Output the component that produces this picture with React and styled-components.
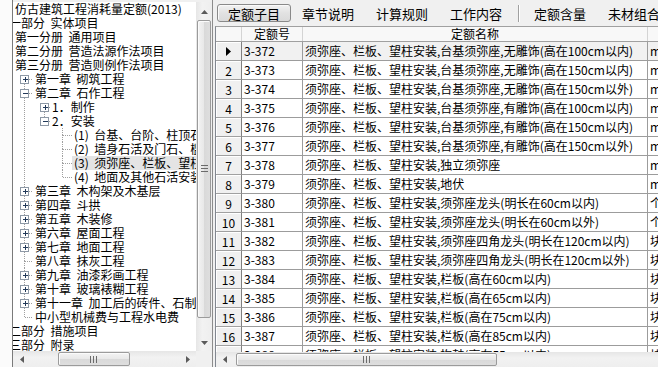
import React from 'react'
import styled, { createGlobalStyle } from 'styled-components'

const GlobalStyle = createGlobalStyle`
  html, body {
    margin: 0;
    padding: 0;
    overflow: hidden;
  }
  body {
    font-family: "Noto Sans CJK SC", "Liberation Sans", sans-serif;
    font-size: 12px;
    color: #000;
    background: #f0f0f0;
  }
`

const Window = styled.div`
  width: 658px;
  height: 367px;
  display: flex;
  overflow: hidden;
  background: #f0f0f0;
`

const EdgeStrip = styled.div`
  width: 12px;
  flex: none;
  background: #fbfbfb;
  border-right: 1px solid #7a7a7a;
`

const TreePane = styled.div`
  width: 199px;
  flex: none;
  margin-top: 2px;
  display: grid;
  grid-template-columns: 183px 16px;
  grid-template-rows: 349px 16px;
  background: #fff;
`

const TreeBody = styled.div`
  overflow: hidden;
  background: #fff;
`

const TreeRow = styled.div`
  height: 14px;
  display: flex;
  align-items: center;
  white-space: pre;
`

const TreeLabel = styled.span`
  flex: none;
  line-height: 14px;
  padding: 0 2px;
  margin-left: ${p => p.$shift || 0}px;
  background: ${p => (p.$selected ? '#e4e4e4' : 'transparent')};
  min-width: ${p => (p.$selected ? '200px' : '0')};
`

const Splitter = styled.div`
  width: 2px;
  flex: none;
  border-left: 1px solid #8c8c8c;
  background: #f0f0f0;
`

const RightPane = styled.div`
  width: 443px;
  flex: none;
  display: flex;
  flex-direction: column;
`

const TabBar = styled.div`
  height: 26px;
  flex: none;
  display: flex;
  align-items: center;
  padding-left: 2px;
  background: #f0f0f0;
`

const Tab = styled.div`
  width: 74px;
  height: 18px;
  flex: none;
  box-sizing: border-box;
  display: flex;
  align-items: center;
  justify-content: center;
  font-size: 13px;
  border: 1px solid ${p => (p.$active ? '#8a8a8a' : 'transparent')};
  border-radius: 3px;
  background: ${p => (p.$active ? 'linear-gradient(#f2f2f2, #e2e2e2 50%, #dadada)' : 'transparent')};
  box-shadow: ${p => (p.$active ? 'inset 1px 1px 0 #fafafa' : 'none')};
`

const TabDivider = styled.div`
  width: 1px;
  height: 17px;
  flex: none;
  margin: 0 3px 0 5px;
  background: #a0a0a0;
  border-right: 1px solid #fff;
`

const Grid = styled.div`
  flex: 1;
  display: flex;
  flex-direction: column;
  border-top: 1px solid #a0a0a0;
  border-left: 1px solid #828790;
  background: #fff;
  overflow: hidden;
`

const HeadRow = styled.div`
  height: 15px;
  flex: none;
  display: flex;
  background: #f8f8f8;
  border-bottom: 1px solid #a0a0a0;
  box-sizing: border-box;
`

const HeadCell = styled.div`
  width: ${p => p.$w}px;
  flex: none;
  box-sizing: border-box;
  border-right: 1px solid #d4d4d4;
  text-align: center;
  line-height: 14px;
  white-space: nowrap;
  overflow: hidden;
`

const Body = styled.div`
  flex: 1;
  overflow: hidden;
`

const GridRow = styled.div`
  height: 19px;
  display: flex;
  background: ${p => (p.$current ? '#f1f1f1' : '#fff')};
`

const RowHead = styled.div`
  width: 26px;
  flex: none;
  box-sizing: border-box;
  display: flex;
  align-items: center;
  justify-content: center;
  background: #f0f0f0;
  border-right: 1px solid #808080;
  border-bottom: 1px solid #a0a0a0;
  box-shadow: inset 1px 1px 0 #fff;
`

const Cell = styled.div`
  width: ${p => p.$w}px;
  flex: none;
  box-sizing: border-box;
  padding-left: 2px;
  line-height: 18px;
  border-right: 1px solid #9c9c9c;
  border-bottom: 1px solid #9c9c9c;
  white-space: nowrap;
  overflow: hidden;
`

const HScroll = styled.div`
  height: ${p => p.$h}px;
  flex: none;
  display: flex;
  align-items: stretch;
  background: linear-gradient(#e6e6e6, #f2f2f2 40%, #eeeeee);
`

const VScroll = styled.div`
  display: flex;
  flex-direction: column;
  background: linear-gradient(to right, #e6e6e6, #f2f2f2 40%, #eeeeee);
`

const ArrowBox = styled.div`
  flex: none;
  width: ${p => (p.$vertical ? 'auto' : '17px')};
  height: ${p => (p.$vertical ? '17px' : 'auto')};
  display: flex;
  align-items: center;
  justify-content: center;
`

const Thumb = styled.div`
  flex: none;
  box-sizing: border-box;
  display: flex;
  align-items: center;
  justify-content: center;
  margin: ${p => (p.$vertical ? '0 1px' : '1px 0')};
  width: ${p => (p.$vertical ? 'auto' : `${p.$size}px`)};
  height: ${p => (p.$vertical ? `${p.$size}px` : 'auto')};
  border: 1px solid #9b9b9b;
  border-radius: 2px;
  background: ${p =>
    p.$vertical
      ? 'linear-gradient(to right, #f3f3f3, #e8e8e8 50%, #d9d9d9 51%, #dedede)'
      : 'linear-gradient(#f3f3f3, #e8e8e8 50%, #d9d9d9 51%, #dedede)'};
  box-shadow: inset 1px 1px 0 #fbfbfb;
`

const Spacer = styled.div`
  flex: none;
  width: ${p => p.$w || 0}px;
  height: ${p => p.$h || 0}px;
`

const Fill = styled.div`
  flex: 1;
`

const Corner = styled.div`
  background: #f0f0f0;
`

const Arrow = ({ dir }) => {
  const pts = {
    up: '0,4 3.5,0 7,4',
    down: '0,0 3.5,4 7,0',
    left: '4,0 0,3.5 4,7',
    right: '0,0 4,3.5 0,7',
  }[dir]
  const vertical = dir === 'up' || dir === 'down'
  return (
    <svg width={vertical ? 7 : 4} height={vertical ? 4 : 7}>
      <polygon points={pts} fill="#5a5a5a" />
    </svg>
  )
}

const Grip = ({ vertical }) => (
  <svg width={vertical ? 7 : 8} height={vertical ? 8 : 7}>
    {[0, 3, 6].map(o =>
      vertical ? (
        <rect key={o} x="0" y={o} width="7" height="1" fill="#6b6b6b" />
      ) : (
        <rect key={o} x={o} y="0" width="1" height="7" fill="#6b6b6b" />
      )
    )}
  </svg>
)

const TreeGutter = ({ g }) => {
  const dots = { stroke: '#a0a0a0', strokeWidth: 1, strokeDasharray: '1 1' }
  const x = g.x + 0.5
  return (
    <svg width={g.w} height="14" style={{ flex: 'none' }} shapeRendering="crispEdges">
      {g.pass.map(p => (
        <line key={p} x1={p + 0.5} y1="0" x2={p + 0.5} y2="14" {...dots} />
      ))}
      {g.top && <line x1={x} y1="0" x2={x} y2={g.box ? 3 : 7} {...dots} />}
      {g.bottom && <line x1={x} y1={g.box ? 12 : 7} x2={x} y2="14" {...dots} />}
      <line x1={g.box ? g.x + 5 : g.x + 1} y1="7.5" x2={g.w} y2="7.5" {...dots} />
      {g.box && (
        <g>
          <rect x={g.x - 3.5} y="3.5" width="8" height="8" fill="#fff" stroke="#8e99a6" />
          <rect x={g.x - 1} y="7" width="5" height="1" fill="#233a5a" />
          {g.box === '+' && <rect x={g.x + 1} y="5" width="1" height="5" fill="#233a5a" />}
        </g>
      )}
    </svg>
  )
}

const chap = (box, top, bottom) => ({ pass: [], x: 11, box, top, bottom, w: 20 })
const sec = (box, top, bottom) => ({ pass: [11], x: 31, box, top, bottom, w: 37 })
const item = bottom => ({ pass: [11], x: 49, box: null, top: true, bottom, w: 59 })

const tree = [
  { text: '仿古建筑工程消耗量定额(2013)' },
  { text: '第一部分  实体项目', shift: -18 },
  { text: '第一分册  通用项目' },
  { text: '第二分册  营造法源作法项目' },
  { text: '第三分册  营造则例作法项目' },
  { text: '第一章  砌筑工程', g: chap('+', false, true) },
  { text: '第二章  石作工程', g: chap('-', true, true) },
  { text: '1．制作', g: sec('+', false, true) },
  { text: '2．安装', g: sec('-', true, false) },
  { text: '(1)  台基、台阶、柱顶石安装', g: item(true) },
  { text: '(2)  墙身石活及门石、槛垫石安装', g: item(true) },
  { text: '(3)  须弥座、栏板、望柱安装', g: item(true), selected: true },
  { text: '(4)  地面及其他石活安装', g: item(false) },
  { text: '第三章  木构架及木基层', g: chap('+', true, true) },
  { text: '第四章  斗拱', g: chap('+', true, true) },
  { text: '第五章  木装修', g: chap('+', true, true) },
  { text: '第六章  屋面工程', g: chap('+', true, true) },
  { text: '第七章  地面工程', g: chap('+', true, true) },
  { text: '第八章  抹灰工程', g: chap(null, true, true) },
  { text: '第九章  油漆彩画工程', g: chap('+', true, true) },
  { text: '第十章  玻璃裱糊工程', g: chap('+', true, true) },
  { text: '第十一章  加工后的砖件、石制品安装', g: chap('+', true, true) },
  { text: '中小型机械费与工程水电费', g: chap(null, true, false) },
  { text: '第二部分  措施项目', shift: -18 },
  { text: '第三部分  附录', shift: -18 },
]

const tabs = ['定额子目', '章节说明', '计算规则', '工作内容', '|', '定额含量', '未材组合']

const prefix = '须弥座、栏板、望柱安装,'
const quotas = [
  ['3-372', '台基须弥座,无雕饰(高在100cm以内)', 'm3'],
  ['3-373', '台基须弥座,无雕饰(高在150cm以内)', 'm3'],
  ['3-374', '台基须弥座,无雕饰(高在150cm以外)', 'm3'],
  ['3-375', '台基须弥座,有雕饰(高在100cm以内)', 'm3'],
  ['3-376', '台基须弥座,有雕饰(高在150cm以内)', 'm3'],
  ['3-377', '台基须弥座,有雕饰(高在150cm以外)', 'm3'],
  ['3-378', '独立须弥座', 'm3'],
  ['3-379', '地伏', 'm3'],
  ['3-380', '须弥座龙头(明长在60cm以内)', '个'],
  ['3-381', '须弥座龙头(明长在60cm以外)', '个'],
  ['3-382', '须弥座四角龙头(明长在120cm以内)', '块'],
  ['3-383', '须弥座四角龙头(明长在120cm以外)', '块'],
  ['3-384', '栏板(高在60cm以内)', '块'],
  ['3-385', '栏板(高在65cm以内)', '块'],
  ['3-386', '栏板(高在75cm以内)', '块'],
  ['3-387', '栏板(高在85cm以内)', '块'],
  ['3-388', '抱鼓(高在55cm以内)', '块'],
]

const cols = [26, 61, 345, 60]

const App = () => {
  return (
    <>
      <GlobalStyle />
      <Window>
        <EdgeStrip />
        <TreePane>
          <TreeBody>
            {tree.map(row => (
              <TreeRow key={row.text}>
                {row.g && <TreeGutter g={row.g} />}
                <TreeLabel $shift={row.shift} $selected={row.selected}>
                  {row.text}
                </TreeLabel>
              </TreeRow>
            ))}
          </TreeBody>
          <VScroll>
            <Spacer $h={1} />
            <ArrowBox $vertical>
              <Arrow dir="up" />
            </ArrowBox>
            <Thumb $vertical $size={298}>
              <Grip vertical />
            </Thumb>
            <Fill />
            <ArrowBox $vertical>
              <Arrow dir="down" />
            </ArrowBox>
          </VScroll>
          <HScroll $h={16}>
            <ArrowBox>
              <Arrow dir="left" />
            </ArrowBox>
            <Spacer $w={28} />
            <Thumb $size={72}>
              <Grip />
            </Thumb>
            <Fill />
            <ArrowBox>
              <Arrow dir="right" />
            </ArrowBox>
          </HScroll>
          <Corner />
        </TreePane>
        <Splitter />
        <RightPane>
          <TabBar>
            {tabs.map((t, i) =>
              t === '|' ? (
                <TabDivider key={i} />
              ) : (
                <Tab key={t} $active={i === 0}>
                  {t}
                </Tab>
              )
            )}
          </TabBar>
          <Grid>
            <HeadRow>
              <HeadCell $w={cols[0]} />
              <HeadCell $w={cols[1]}>定额号</HeadCell>
              <HeadCell $w={cols[2]}>定额名称</HeadCell>
              <HeadCell $w={cols[3]}>单位</HeadCell>
            </HeadRow>
            <Body>
              {quotas.map(([code, name, unit], i) => (
                <GridRow key={code} $current={i === 0}>
                  <RowHead>
                    {i === 0 ? (
                      <svg width="5" height="9">
                        <polygon points="0,0 5,4.5 0,9" fill="#000" />
                      </svg>
                    ) : (
                      i + 1
                    )}
                  </RowHead>
                  <Cell $w={cols[1]}>{code}</Cell>
                  <Cell $w={cols[2]}>{prefix + name}</Cell>
                  <Cell $w={cols[3]}>{unit}</Cell>
                </GridRow>
              ))}
            </Body>
            <HScroll $h={15}>
              <ArrowBox>
                <Arrow dir="left" />
              </ArrowBox>
              <Spacer $w={3} />
              <Thumb $size={261}>
                <Grip />
              </Thumb>
              <Fill />
            </HScroll>
          </Grid>
        </RightPane>
      </Window>
    </>
  )
}

export default App
